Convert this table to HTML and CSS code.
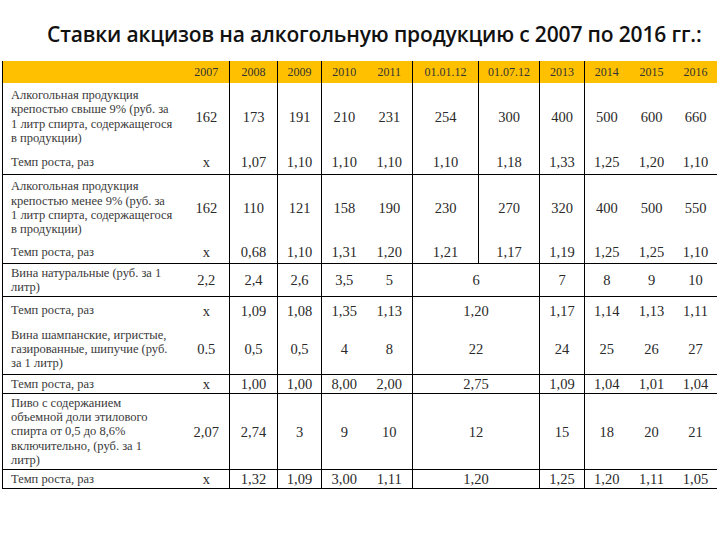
FILE: index.html
```html
<!DOCTYPE html>
<html lang="ru">
<head>
<meta charset="utf-8">
<title>Ставки акцизов</title>
<link rel="stylesheet" href="styles.css">
</head>
<body>
<h1 class="title">Ставки акцизов на алкогольную продукцию с 2007 по 2016 гг.:</h1>
<table class="rates">
  <colgroup>
    <col class="c-label">
    <col class="c-y07 vr">
    <col class="c-y08 vr">
    <col class="c-y09 vr">
    <col class="c-y10">
    <col class="c-y11 vr">
    <col class="c-d1 vr">
    <col class="c-d2 vr">
    <col class="c-y13 vr">
    <col class="c-y14">
    <col class="c-y15">
    <col class="c-y16">
  </colgroup>
  <thead>
    <tr class="head">
      <th></th><th>2007</th><th>2008</th><th>2009</th><th>2010</th><th>2011</th><th>01.01.12</th><th>01.07.12</th><th>2013</th><th>2014</th><th>2015</th><th>2016</th>
    </tr>
  </thead>
  <tbody>
    <tr class="h67">
      <td class="label">Алкогольная продукция<br>крепостью свыше 9% (руб. за<br>1 литр спирта, содержащегося<br>в продукции)</td>
      <td>162</td><td>173</td><td>191</td><td>210</td><td>231</td><td>254</td><td>300</td><td>400</td><td>500</td><td>600</td><td>660</td>
    </tr>
    <tr class="h24 sep">
      <td class="label">Темп роста, раз</td>
      <td>x</td><td>1,07</td><td>1,10</td><td>1,10</td><td>1,10</td><td>1,10</td><td>1,18</td><td>1,33</td><td>1,25</td><td>1,20</td><td>1,10</td>
    </tr>
    <tr class="h66">
      <td class="label">Алкогольная продукция<br>крепостью менее 9% (руб. за<br>1 литр спирта, содержащегося<br>в продукции)</td>
      <td>162</td><td>110</td><td>121</td><td>158</td><td>190</td><td>230</td><td>270</td><td>320</td><td>400</td><td>500</td><td>550</td>
    </tr>
    <tr class="h22 sep">
      <td class="label">Темп роста, раз</td>
      <td>x</td><td>0,68</td><td>1,10</td><td>1,31</td><td>1,20</td><td>1,21</td><td>1,17</td><td>1,19</td><td>1,25</td><td>1,25</td><td>1,10</td>
    </tr>
    <tr class="h32 sep">
      <td class="label">Вина натуральные (руб. за 1<br>литр)</td>
      <td>2,2</td><td>2,4</td><td>2,6</td><td>3,5</td><td>5</td><td colspan="2">6</td><td>7</td><td>8</td><td>9</td><td>10</td>
    </tr>
    <tr class="h27">
      <td class="label">Темп роста, раз</td>
      <td>x</td><td>1,09</td><td>1,08</td><td>1,35</td><td>1,13</td><td colspan="2">1,20</td><td>1,17</td><td>1,14</td><td>1,13</td><td>1,11</td>
    </tr>
    <tr class="h50 sep">
      <td class="label">Вина шампанские, игристые,<br>газированные, шипучие (руб.<br>за 1 литр)</td>
      <td>0.5</td><td>0,5</td><td>0,5</td><td>4</td><td>8</td><td colspan="2">22</td><td>24</td><td>25</td><td>26</td><td>27</td>
    </tr>
    <tr class="h18 sep">
      <td class="label">Темп роста, раз</td>
      <td>x</td><td>1,00</td><td>1,00</td><td>8,00</td><td>2,00</td><td colspan="2">2,75</td><td>1,09</td><td>1,04</td><td>1,01</td><td>1,04</td>
    </tr>
    <tr class="h75 sep">
      <td class="label">Пиво с содержанием<br>объемной доли этилового<br>спирта от 0,5 до 8,6%<br>включительно, (руб. за 1<br>литр)</td>
      <td>2,07</td><td>2,74</td><td>3</td><td>9</td><td>10</td><td colspan="2">12</td><td>15</td><td>18</td><td>20</td><td>21</td>
    </tr>
    <tr class="h18 sep">
      <td class="label">Темп роста, раз</td>
      <td>x</td><td>1,32</td><td>1,09</td><td>3,00</td><td>1,11</td><td colspan="2">1,20</td><td>1,25</td><td>1,20</td><td>1,11</td><td>1,05</td>
    </tr>
  </tbody>
</table>
</body>
</html>
```

FILE: styles.css
```css
html, body {
  margin: 0;
  padding: 0;
  background: #ffffff;
}

.title {
  margin: 0;
  padding: 22px 0 0 47px;
  height: 39px;
  box-sizing: border-box;
  font-family: "Open Sans", "Noto Sans", sans-serif;
  font-weight: 600;
  font-size: 21px;
  line-height: 24px;
  color: #111111;
  letter-spacing: -0.15px;
  white-space: nowrap;
}

.rates {
  margin: 22px 0 0 2px;
  width: 714px;
  table-layout: fixed;
  border-collapse: collapse;
  border-left: 1px solid #000;
  font-family: "Liberation Serif", "Times New Roman", serif;
  color: #2a2a2a;
}

.c-label { width: 181px; }
.c-y07 { width: 46px; }
.c-y08 { width: 48px; }
.c-y09 { width: 44px; }
.c-y10 { width: 45px; }
.c-y11 { width: 46px; }
.c-d1 { width: 66px; }
.c-d2 { width: 61px; }
.c-y13 { width: 45px; }
.c-y14 { width: 44px; }
.c-y15 { width: 46px; }
.c-y16 { width: 42px; }

.vr { border-right: 1px solid #000; }

.head th {
  background: #ffc000;
  height: 22px;
  padding: 0;
  font-weight: normal;
  font-size: 12px;
  color: #333;
  text-align: center;
}

.rates td {
  padding: 0;
  text-align: center;
  vertical-align: middle;
  font-size: 14.5px;
  line-height: 16px;
}

.rates td.label {
  text-align: left;
  padding-left: 8px;
  font-size: 12.5px;
  line-height: 14.3px;
  color: #3a3a3a;
  white-space: nowrap;
}

.sep td { border-bottom: 1px solid #000; }

.h67 td { height: 67px; }
.h66 td { height: 66px; }
.h24 td { height: 24px; }
.h22 td { height: 22px; }
.h32 td { height: 32px; }
.h27 td { height: 27px; }
.h50 td { height: 50px; }
.h18 td { height: 18px; }
.h75 td { height: 75px; }
```
